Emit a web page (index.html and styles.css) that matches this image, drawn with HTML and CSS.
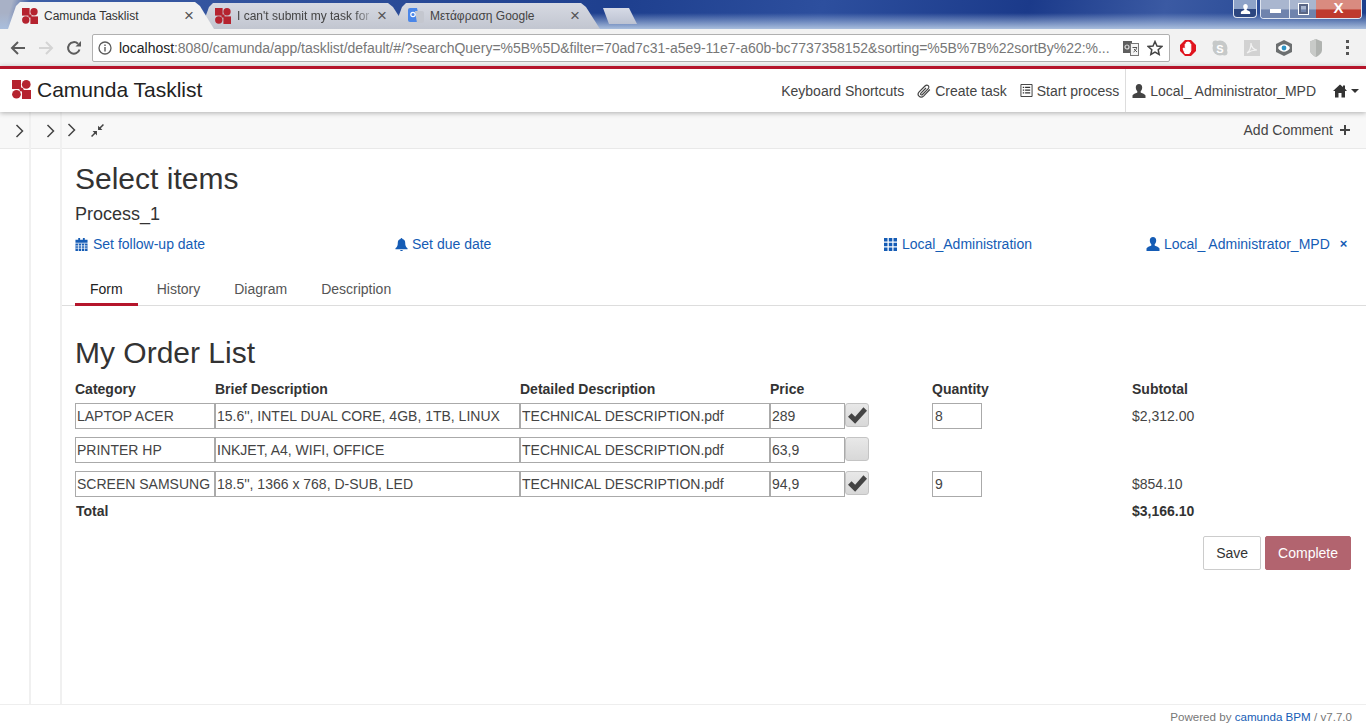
FILE: index.html
```html
<!DOCTYPE html>
<html lang="en">
<head>
<meta charset="utf-8">
<title>Camunda Tasklist</title>
<link rel="stylesheet" href="styles.css">
</head>
<body>
<svg class="defs" width="0" height="0" aria-hidden="true">
  <symbol id="cam" viewBox="0 0 20 20">
    <rect x="0" y="0" width="9.500" height="9.500" fill="#b5232f"/>
    <rect x="10.500" y="10.500" width="9.500" height="9.500" fill="#b5232f"/>
    <circle cx="15" cy="4.700" r="4.600" fill="#b5232f"/>
    <circle cx="4.700" cy="15" r="4.600" fill="#b5232f"/>
    <circle cx="10" cy="10" r="2.200" fill="#b5232f"/>
  </symbol>
  <symbol id="user" viewBox="0 0 14 14">
    <path d="M7 0c2 0 3.200 1.500 3.200 3.500 0 1.500-.7 3-1.500 3.800v1.200c.5.500 4.300 1.300 4.800 3V14H.5v-2.500c.5-1.700 4.300-2.500 4.800-3V7.300C4.500 6.500 3.800 5 3.800 3.500 3.800 1.500 5 0 7 0z" fill="currentColor"/>
  </symbol>
</svg>

<div class="browser">
  <div class="tabstrip">
    <div class="tab tab-active">
      <svg class="fav"><use href="#cam"/></svg>
      <span class="tab-title">Camunda Tasklist</span>
      <span class="tab-x">×</span>
    </div>
    <div class="tab">
      <svg class="fav"><use href="#cam"/></svg>
      <span class="tab-title tab-fade">I can't submit my task for</span>
      <span class="tab-x">×</span>
    </div>
    <div class="tab">
      <svg class="fav" viewBox="0 0 16 16"><path d="M0 2a2 2 0 0 1 2-2h7l3 14H2a2 2 0 0 1-2-2z" fill="#4a86e8"/><path d="M7 3l2 12h5a2 2 0 0 0 2-2V5a2 2 0 0 0-2-2z" fill="#c4c7cf"/><circle cx="5" cy="6.500" r="2.200" fill="none" stroke="#fff" stroke-width="1.200"/></svg>
      <span class="tab-title">Μετάφραση Google</span>
      <span class="tab-x">×</span>
    </div>
    <div class="tab-new"></div>
    <div class="winbtns">
      <div class="win win-user"><svg width="11" height="10"><use href="#user"/></svg></div>
      <div class="win-group">
        <div class="win win-min"><span></span></div>
        <div class="win win-max"><span></span></div>
        <div class="win win-close">X</div>
      </div>
    </div>
  </div>
  <div class="toolbar">
    <svg class="nav" viewBox="0 0 16 16"><path d="M15 8H2M8 2L2 8l6 6" fill="none" stroke="#5c5c5c" stroke-width="2"/></svg>
    <svg class="nav" viewBox="0 0 16 16"><path d="M1 8h13M8 2l6 6-6 6" fill="none" stroke="#d4d4d4" stroke-width="2"/></svg>
    <svg class="nav" viewBox="0 0 16 16"><path d="M13.500 9.500A5.800 5.800 0 1 1 12 3.800" fill="none" stroke="#5c5c5c" stroke-width="2"/><path d="M9.500 6.500H15V1z" fill="#5c5c5c"/></svg>
    <div class="omnibox">
      <svg class="info" viewBox="0 0 14 14"><circle cx="7" cy="7" r="6" fill="none" stroke="#5c5c5c" stroke-width="1.300"/><path d="M6.300 6h1.400v4.500H6.300zM6.300 3.500h1.400v1.400H6.300z" fill="#5c5c5c"/></svg>
      <span class="url"><b>localhost</b>:8080/camunda/app/tasklist/default/#/?searchQuery=%5B%5D&amp;filter=70ad7c31-a5e9-11e7-a60b-bc7737358152&amp;sorting=%5B%7B%22sortBy%22:%...</span>
      <svg class="omni-ic" viewBox="0 0 16 16"><rect x="0" y="1" width="9" height="12" fill="#5f5f5f"/><rect x="7.500" y="3.500" width="8" height="12" fill="#f4f4f4" stroke="#777"/><circle cx="4" cy="7" r="2" fill="none" stroke="#ddd" stroke-width="1.200"/><path d="M9.500 7.500h4.500M10.500 12c2-1 3-3 3.200-4.500M11 9l3 3" stroke="#555" fill="none"/></svg>
      <svg class="omni-ic star" viewBox="0 0 16 16"><path d="M8 1.500l2 4.500 4.800.5-3.600 3.200 1 4.800L8 12.100l-4.200 2.400 1-4.800L1.200 6.500 6 6z" fill="none" stroke="#444" stroke-width="1.500"/></svg>
    </div>
    <svg class="ext" viewBox="0 0 16 18"><path d="M5 1h6l5 5v6l-5 5H5l-5-5V6z" fill="#e0141e"/><path d="M5 14.500L3 9.500l1-.5 1.200 1.500V5h1v3V3.500h1.200V8 3h1.200v5V3.500h1.200V8 5h1v7l-1.500 2.500z" fill="#fff" stroke="#fff"/></svg>
    <svg class="ext" viewBox="0 0 16 18"><circle cx="8" cy="9" r="7.500" fill="#c6c9c9"/><circle cx="3.500" cy="4.500" r="3" fill="#c6c9c9"/><circle cx="12.500" cy="13.500" r="3" fill="#c6c9c9"/><text class="ext-s" x="8" y="13.500" text-anchor="middle">S</text></svg>
    <svg class="ext" viewBox="0 0 16 18"><rect x="0" y="1" width="16" height="16" fill="#d2d2d2"/><path d="M3 14c3-2 4-7 4-10 0 4 3 7 6 7-4 0-7 1-10 3z" fill="none" stroke="#f2f2f2" stroke-width="1.200"/></svg>
    <svg class="ext" viewBox="0 0 16 18"><path d="M8 1l8 4v8l-8 4-8-4V5z" fill="#6c6f70"/><path d="M2 9c3-5 9-5 12 0-3 5-9 5-12 0z" fill="#fff"/><circle cx="8" cy="9" r="2.400" fill="#2f93c4"/></svg>
    <svg class="ext" viewBox="0 0 16 18"><path d="M8 0l6 2.500V11c0 3-3 5.500-6 7-3-1.500-6-4-6-7V2.500z" fill="#b0b3b0"/><path d="M8 0v18c-3-1.500-6-4-6-7V2.500z" fill="#c8cac8"/></svg>
    <div class="kebab"><i></i><i></i><i></i></div>
  </div>
</div>

<header class="appbar">
  <div class="brand">
    <svg class="brand-logo"><use href="#cam"/></svg>
    <span class="brand-name">Camunda Tasklist</span>
  </div>
  <nav class="appnav">
    <span class="appnav-item">Keyboard Shortcuts</span>
    <span class="appnav-item">
      <svg class="ic14" viewBox="0 0 14 14"><path d="M12.800 5.500L6.800 11.800c-1.500 1.500-3.600 1.600-4.800.4S.9 9.100 2.400 7.600L8 2c1-1 2.400-1.100 3.200-.3s.8 2.200-.2 3.200L5.500 10.500c-.5.500-1.200.6-1.600.2s-.4-1.100.1-1.600L9 4" fill="none" stroke="#444" stroke-width="1.200"/></svg>
      Create task
    </span>
    <span class="appnav-item appnav-start">
      <svg class="ic13" viewBox="0 0 13 14"><path d="M.5.500h12v13H.5z" fill="#fff" stroke="#333"/><path d="M2.500 3h1.500v1.300H2.500zM5 3h5.500v1.300H5zM2.500 6h1.500v1.300H2.500zM5 6h5.500v1.300H5zM2.500 9h1.500v1.300H2.500zM5 9h5.500v1.300H5z" fill="#333"/></svg>
      Start process
    </span>
    <span class="appnav-item appnav-user">
      <svg class="ic14"><use href="#user"/></svg>
      Local_ Administrator_MPD
    </span>
    <span class="appnav-home">
      <svg class="ic14" viewBox="0 0 14 13"><path d="M7 0l3 2.600V1h2v3.300L14 6.500h-2V13H8.500V8.500h-3V13H2V6.500H0z" fill="#333"/></svg>
      <i class="caret"></i>
    </span>
  </nav>
</header>

<div class="workspace">
  <aside class="rail rail-one"><div class="rail-head"><svg class="chev" viewBox="0 0 9 14"><path d="M1.500 1l6 6-6 6" fill="none" stroke="#444" stroke-width="1.500"/></svg></div></aside>
  <aside class="rail rail-two"><div class="rail-head"><svg class="chev" viewBox="0 0 9 14"><path d="M1.500 1l6 6-6 6" fill="none" stroke="#444" stroke-width="1.500"/></svg></div></aside>
  <main class="task">
    <div class="taskbar">
      <svg class="chev" viewBox="0 0 9 14"><path d="M1.500 1l6 6-6 6" fill="none" stroke="#444" stroke-width="1.500"/></svg>
      <svg class="compress" viewBox="0 0 12 12"><path d="M6.500 5.500V1.500L8 3l3-3 1 1-3 3 1.500 1.500zM5.500 6.500v4L4 9l-3 3-1-1 3-3-1.500-1.500z" fill="#444"/></svg>
      <span class="add-comment">Add Comment <svg class="plus" viewBox="0 0 10 10"><path d="M5 0v10M0 5h10" stroke="#444" stroke-width="2"/></svg></span>
    </div>
    <div class="task-head">
      <h2 class="task-title">Select items</h2>
      <h4 class="task-proc">Process_1</h4>
      <div class="task-meta">
        <a class="meta meta-follow"><svg class="ic13" viewBox="0 0 13 14"><path d="M0 2h3V0h2v2h3V0h2v2h3v3H0zM0 6h13v8H0z" fill="#155cb5"/><path d="M0 8.500h13M0 11h13M3.200 6v8M6.500 6v8M9.800 6v8" stroke="#fff" stroke-width=".8"/></svg> Set follow-up date</a>
        <a class="meta meta-due"><svg class="ic13" viewBox="0 0 13 14"><path d="M6.500 0c.6 0 1 .4 1 1 2 .5 3 2 3 4 0 3 .5 4.500 2.500 6v1H0v-1c2-1.500 2.500-3 2.500-6 0-2 1-3.500 3-4 0-.6.4-1 1-1zM5 12.800h3c0 .8-.7 1.200-1.500 1.200S5 13.600 5 12.800z" fill="#155cb5"/></svg> Set due date</a>
        <a class="meta meta-group"><svg class="ic13" viewBox="0 0 13 13"><path d="M0 0h3.500v3.500H0zM4.800 0h3.500v3.500H4.800zM9.500 0H13v3.500H9.500zM0 4.800h3.500v3.500H0zM4.800 4.800h3.500v3.500H4.800zM9.500 4.800H13v3.500H9.500zM0 9.500h3.500V13H0zM4.800 9.500h3.500V13H4.800zM9.500 9.500H13V13H9.500z" fill="#155cb5"/></svg> Local_Administration</a>
        <a class="meta meta-user"><svg class="ic14"><use href="#user"/></svg> Local_ Administrator_MPD</a>
        <a class="meta-x">×</a>
      </div>
    </div>
    <ul class="tabs">
      <li class="tabs-item tabs-on">Form</li>
      <li class="tabs-item tabs-hist">History</li>
      <li class="tabs-item">Diagram</li>
      <li class="tabs-item">Description</li>
    </ul>
    <section class="form">
      <h2 class="form-title">My Order List</h2>
      <div class="grid">
        <div class="th">Category</div><div class="th">Brief Description</div><div class="th">Detailed Description</div><div class="th">Price</div><div class="th">Quantity</div><div class="th">Subtotal</div>

        <input class="inp" value="LAPTOP ACER"><input class="inp" value="15.6'', INTEL DUAL CORE, 4GB, 1TB, LINUX"><input class="inp" value="TECHNICAL DESCRIPTION.pdf">
        <div class="price"><input class="inp" value="289"><span class="chk"><svg viewBox="0 0 16 14"><path d="M0 8l3-3 3 3L13 0l3 3L6 14z" fill="#444"/></svg></span></div>
        <input class="inp qty" value="8"><div class="sub">$2,312.00</div>

        <input class="inp" value="PRINTER HP"><input class="inp" value="INKJET, A4, WIFI, OFFICE"><input class="inp" value="TECHNICAL DESCRIPTION.pdf">
        <div class="price"><input class="inp" value="63,9"><span class="chk"></span></div>
        <div></div><div></div>

        <input class="inp" value="SCREEN SAMSUNG"><input class="inp" value="18.5'', 1366 x 768, D-SUB, LED"><input class="inp" value="TECHNICAL DESCRIPTION.pdf">
        <div class="price"><input class="inp" value="94,9"><span class="chk"><svg viewBox="0 0 16 14"><path d="M0 8l3-3 3 3L13 0l3 3L6 14z" fill="#444"/></svg></span></div>
        <input class="inp qty" value="9"><div class="sub">$854.10</div>

        <div class="total">Total</div><div class="total-sp"></div><div class="total-val">$3,166.10</div>
      </div>
      <div class="actions">
        <button class="btn">Save</button>
        <button class="btn btn-primary">Complete</button>
      </div>
    </section>
  </main>
</div>

<footer class="foot">Powered by <a>camunda BPM</a> / v7.7.0</footer>
</body>
</html>
```
FILE: styles.css
```css
* { box-sizing: border-box; }
html, body { margin: 0; height: 100%; }
body { height: 728px; overflow: hidden; font: 14px/20px "Liberation Sans", Arial, sans-serif; color: #333; background: #fff; display: flex; flex-direction: column; }
.defs { position: absolute; }
svg { display: inline-block; }

.browser { flex: none; }
.tabstrip { height: 29px; display: flex; align-items: flex-end; padding-left: 8px; background: linear-gradient(180deg, rgba(255,255,255,0) 45%, #a9bedd 100%), linear-gradient(105deg, #a8b1c6 0, #a8b1c6 12px, #3d5ea6 30px, #1e3f8e 45%, #2d4f9e 60%, #1b3a8a 75%, #3b5aa3 85%, #1c3f8c 100%); }
.tab { width: 206px; height: 26px; margin-right: -13px; padding: 0 19px 0 14px; display: flex; align-items: center; background: linear-gradient(180deg, #d6d9e2, #c2c6d0); clip-path: polygon(0 100%, 8px 15%, 12px 0, 187px 0, 192px 15%, 206px 100%); font-size: 12px; color: #444; position: relative; }
.tab-active { background: #f2f2f2; color: #333; height: 27px; z-index: 1; }
.fav { width: 16px; height: 16px; flex: none; margin-right: 6px; }
.tab-title { flex: 1; min-width: 0; white-space: nowrap; overflow: hidden; margin-right: 1px; }
.tab-fade { -webkit-mask-image: linear-gradient(90deg, #000 85%, transparent); mask-image: linear-gradient(90deg, #000 85%, transparent); }
.tab-x { width: 12px; flex: none; font-size: 17px; text-align: center; color: #555; }
.tab-new { width: 34px; height: 16px; margin: 0 0 5px 16px; background: linear-gradient(180deg, #d6dae6, #bcc2d2); clip-path: polygon(0 0, 26px 0, 34px 100%, 6px 100%); }
.winbtns { margin-left: auto; margin-right: 4px; align-self: flex-start; display: flex; gap: 3px; }
.win { height: 18px; display: flex; align-items: center; justify-content: center; color: #fff; line-height: 16px; }
.win-user { width: 24px; border: 1px solid #dfe5f0; border-top: 0; border-radius: 0 0 4px 4px; background: linear-gradient(180deg, #8ea3c8 0, #8ea3c8 50%, #2c4680 55%, #2c4680 100%); }
.win-group { display: flex; border: 1px solid #dfe5f0; border-top: 0; border-radius: 0 0 4px 4px; overflow: hidden; }
.win-min, .win-max { background: linear-gradient(180deg, #a9b6cf 0, #a9b6cf 50%, #6f83ad 55%, #6f83ad 100%); }
.win-min { width: 28px; }
.win-max { width: 27px; border-left: 1px solid #dfe5f0; }
.win-min span { width: 11px; height: 4px; background: #fff; margin-top: 4px; }
.win-max span { width: 9px; height: 10px; border: 2px solid #5a6685; outline: 1px solid #fff; }
.win-close { width: 45px; background: linear-gradient(180deg, #d98b80 0, #d98b80 50%, #bf3a2e 55%, #bf3a2e 100%); font-weight: bold; font-size: 15px; padding-bottom: 2px; }

.toolbar { height: 37px; display: flex; align-items: center; padding-left: 10px; background: #f2f2f2; }
.nav { width: 16px; height: 16px; margin-right: 12px; flex: none; }
.omnibox { width: 1078px; height: 28px; margin-left: -2px; padding: 0 6px 0 5px; display: flex; align-items: center; gap: 7px; background: #fff; border: 1px solid #b0b0b0; border-radius: 2px; }
.info { width: 14px; height: 14px; flex: none; }
.url { flex: 1; min-width: 0; white-space: nowrap; overflow: hidden; color: #777; font-size: 14px; letter-spacing: -.03px; }
.url b { font-weight: normal; color: #222; }
.omni-ic { width: 16px; height: 16px; flex: none; margin-left: 1px; }
.ext { width: 16px; height: 18px; margin-left: 16px; flex: none; }
.omnibox + .ext { margin-left: 10px; }
.ext-s { font: bold 11px "Liberation Sans", Arial, sans-serif; fill: #fff; }
.kebab { display: flex; flex-direction: column; gap: 3px; margin-left: 22px; }
.kebab i { width: 3px; height: 3px; background: #555; }

.appbar { flex: none; height: 46px; border-top: 3px solid #b5152b; display: flex; align-items: center; justify-content: space-between; background: #fff; box-shadow: 0 1px 5px rgba(0,0,0,.3); position: relative; z-index: 2; }
.brand { display: flex; align-items: center; padding-left: 12px; gap: 6px; margin-top: -2px; }
.brand-logo { width: 19px; height: 19px; }
.brand-name { font-size: 21px; color: #222; }
.appnav { display: flex; align-items: center; height: 100%; color: #444; }
.appnav-item { display: flex; align-items: center; gap: 4px; padding: 0 7px 0 6px; }
.appnav-start { padding-right: 6px; }
.appnav-user { align-self: stretch; border-left: 1px solid #ddd; padding-left: 6px; padding-right: 17px; }
.appnav-home { display: flex; align-items: center; gap: 4px; padding-right: 7px; }
.caret { width: 0; height: 0; border: 4px solid transparent; border-top-color: #333; border-bottom: 0; }
.ic13 { width: 13px; height: 13px; flex: none; }
.ic14 { width: 14px; height: 14px; flex: none; }

.workspace { flex: 1; display: flex; min-height: 0; }
.rail { width: 31px; flex: none; border-right: 2px solid #f0f0f0; }
.rail-head { height: 37px; background: #f8f8f8; border-bottom: 1px solid #e9e9e9; padding: 12px 0 0 15px; }
.chev { width: 9px; height: 14px; display: block; }
.task { flex: 1; min-width: 0; }
.taskbar { height: 37px; background: #f8f8f8; border-bottom: 1px solid #e9e9e9; display: flex; align-items: center; padding: 0 16px 0 5px; gap: 15px; }
.compress { width: 13px; height: 13px; }
.add-comment { margin-left: auto; display: flex; align-items: center; gap: 7px; color: #444; }
.plus { width: 10px; height: 10px; }

.task-head { padding: 0 13px; }
.task-title { margin: 13px 0 0; font-size: 30px; line-height: 33px; font-weight: normal; }
.task-proc { margin: 9px 0 0; font-size: 18px; line-height: 20px; font-weight: normal; }
.task-meta { display: flex; margin-top: 10px; height: 20px; align-items: center; }
.meta { color: #155cb5; display: flex; align-items: center; gap: 5px; white-space: nowrap; }
.meta-follow { width: 320px; }
.meta-due { width: 489px; gap: 4px; }
.meta-group { width: 262px; }
.meta-user { gap: 4px; }
.meta-x { color: #155cb5; margin-left: 10px; font-weight: bold; font-size: 13px; }
.tabs { list-style: none; display: flex; margin: 15px 0 0; padding: 0 0 0 13px; height: 37px; border-bottom: 1px solid #ddd; }
.tabs-item { padding: 10px 15px 0; height: 37px; color: #555; margin-right: 4px; }
.tabs-on { color: #222; border-bottom: 3px solid #b5152b; }
.form { padding: 30px 15px 0 13px; }
.form-title { margin: 0; font-size: 30px; line-height: 33px; font-weight: normal; }
.grid { display: grid; grid-template-columns: 140px 305px 250px 162px 200px 1fr; grid-template-rows: 16px 26px 26px 26px 20px; row-gap: 8px; margin-top: 10px; }
.th { font-weight: bold; line-height: 20px; height: 20px; }
.inp { height: 26px; width: 100%; font: 14px "Liberation Sans", Arial, sans-serif; color: #444; border: 1px solid #aaa; padding: 0 1px; background: #fff; min-width: 0; }
.price { display: flex; align-items: flex-start; }
.price .inp { width: 75px; flex: none; }
.chk { width: 24px; height: 24px; flex: none; background: linear-gradient(180deg, #e8e8e8, #d8d8d8); border: 1px solid #c4c4c4; border-radius: 3px; display: flex; align-items: center; justify-content: center; }
.chk svg { width: 19px; height: 17px; }
.qty { width: 50px; padding-left: 2px; }
.sub { line-height: 26px; color: #444; }
.total { font-weight: bold; line-height: 20px; padding-left: 1px; margin-top: -4px; }
.total-sp { grid-column: 2 / span 4; }
.total-val { font-weight: bold; line-height: 20px; margin-top: -4px; }
.actions { display: flex; justify-content: flex-end; gap: 4px; margin-top: 11px; }
.btn { height: 34px; padding: 0 12px; font: 14px "Liberation Sans", Arial, sans-serif; color: #333; background: #fff; border: 1px solid #ccc; border-radius: 2px; }
.btn-primary { background: #b2646f; border-color: #b2646f; color: #fff; }

.foot { flex: none; height: 24px; border-top: 1px solid #eee; text-align: right; padding: 2px 14px 0 0; font-size: 11.6px; line-height: 20px; color: #777; }
.foot a { color: #155cb5; }
```
